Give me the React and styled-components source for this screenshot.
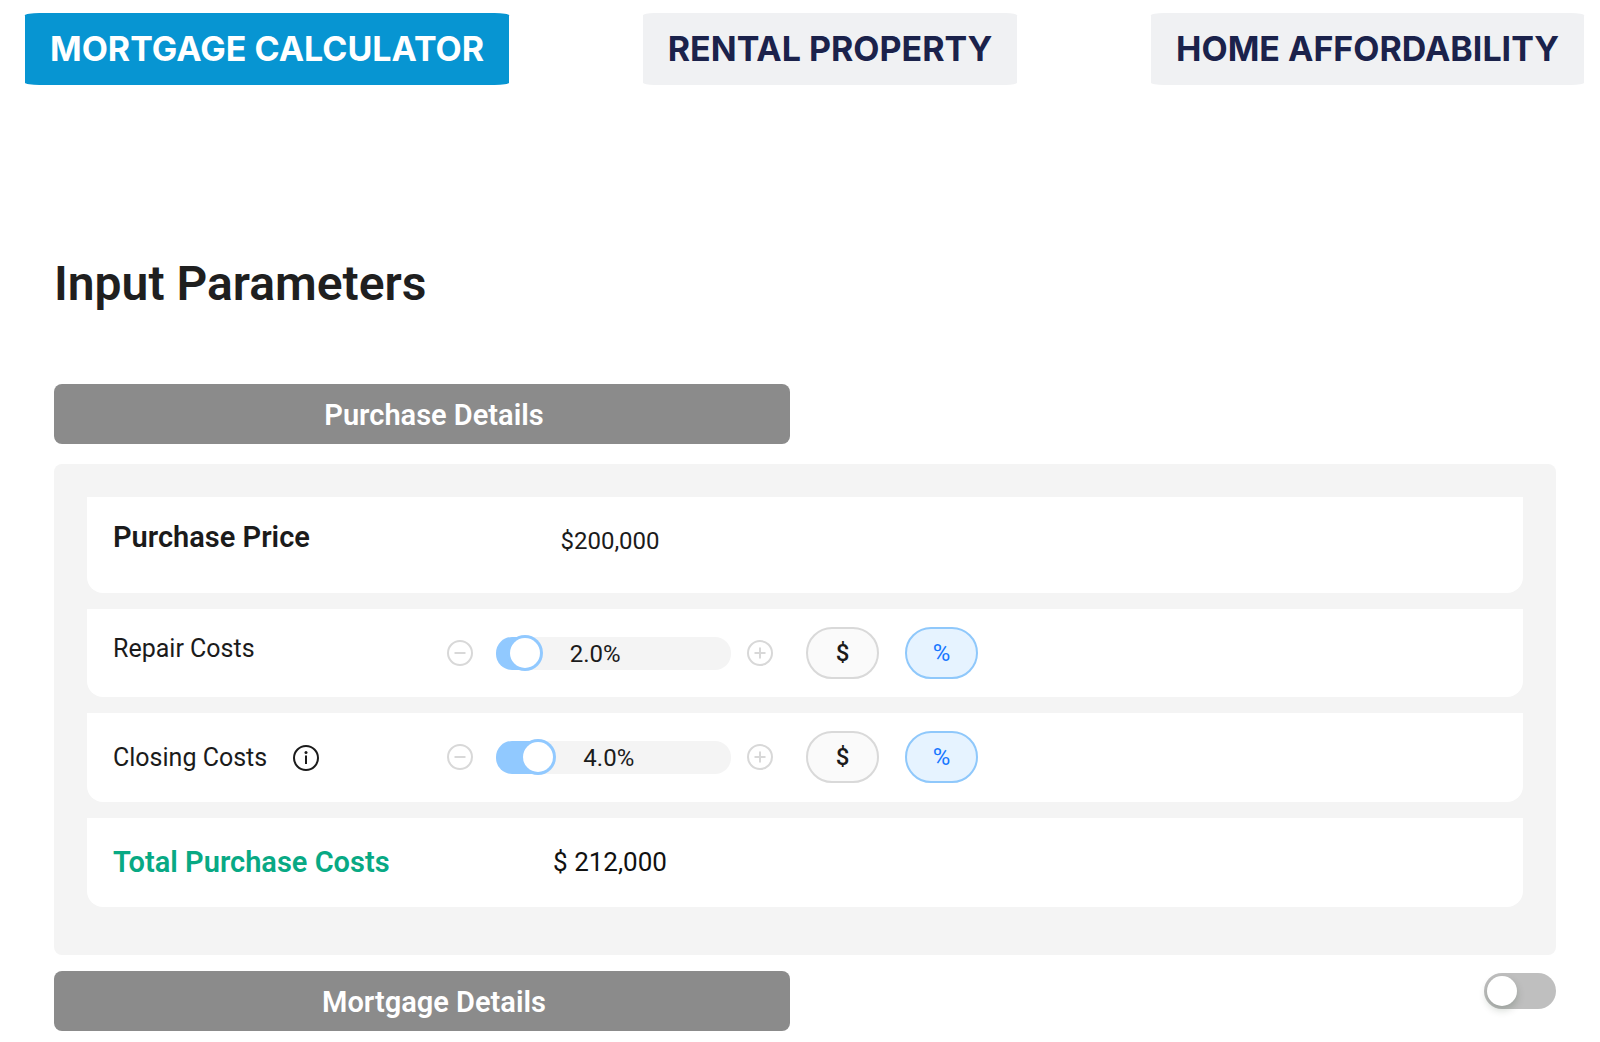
import React, { useId, useState } from "react";
import styled, { createGlobalStyle } from "styled-components";

const GlobalStyle = createGlobalStyle`
  *, *::before, *::after { box-sizing: border-box; }
  body {
    margin: 0;
    background: #ffffff;
    color: #1b1b1b;
    font-family: Roboto, "Liberation Sans", sans-serif;
  }
  button, input { font-family: inherit; }
`;

const Page = styled.div`
  padding-bottom: 11px;
`;

const Tabs = styled.nav`
  display: flex;
  justify-content: space-between;
  padding: 13px 16px 0 25px;
`;

const Tab = styled.button`
  padding: 0 25px;
  border: 0;
  border-radius: 3%;
  background: ${(p) => (p.$active ? "#0795d2" : "#f0f1f3")};
  color: ${(p) => (p.$active ? "#ffffff" : "#1b224b")};
  font: 700 34px/72px Inter, "Liberation Sans", sans-serif;
  text-transform: uppercase;
  white-space: nowrap;
  cursor: pointer;
`;

const Content = styled.main`
  display: flex;
  flex-direction: column;
  padding: 169px 44px 0 54px;
`;

const Title = styled.h1`
  margin: 0 0 70px;
  color: #1f1f1f;
  font-size: 48px;
  font-weight: 600;
  line-height: 60px;
`;

const SectionBar = styled.div`
  display: flex;
  justify-content: space-between;
  align-items: flex-start;
`;

const SectionTitle = styled.h2`
  width: 49%;
  margin: 0;
  padding: 2px 0 0 24px;
  border-radius: 8px;
  background: #8b8b8b;
  color: #ffffff;
  font-size: 29px;
  font-weight: 600;
  line-height: 58px;
  text-align: center;
`;

const Panel = styled.section`
  display: flex;
  flex-direction: column;
  gap: 16px;
  margin: 20px 0 16px;
  padding: 33px 33px 48px;
  border-radius: 8px;
  background: #f4f4f4;
`;

const Row = styled.div`
  display: grid;
  grid-template-columns: 334px 326px auto;
  justify-content: start;
  align-items: start;
  padding: 18px 26px ${(p) => (p.$tall ? "26px" : "18px")};
  border-radius: 0 0 16px 16px;
  background: #ffffff;
`;

const LabelCell = styled.div`
  display: flex;
  align-items: center;
  gap: 26px;
`;

const Label = styled.label`
  color: ${(p) => (p.$accent ? "#08a984" : "#1b1b1b")};
  font-size: ${(p) => (p.$strong ? "29px" : "25px")};
  font-weight: ${(p) => (p.$strong ? 600 : 400)};
  line-height: ${(p) => (p.$raised ? "44px" : "53px")};
  white-space: nowrap;
`;

const InfoButton = styled.button`
  display: flex;
  padding: 0;
  border: 0;
  background: none;
  color: #1b1b1b;
  cursor: pointer;
`;

const PriceInput = styled.input`
  width: 100%;
  height: 52px;
  padding: 0;
  border: 0;
  background: transparent;
  color: #1b1b1b;
  font-size: 24px;
  text-align: center;
`;

const Total = styled.output`
  color: #111111;
  font-size: 26px;
  line-height: 53px;
  text-align: center;
`;

const Stepper = styled.div`
  display: flex;
  align-items: center;
  height: 52px;
`;

const StepButton = styled.button`
  display: flex;
  flex: none;
  padding: 0;
  border: 0;
  background: none;
  color: #d8d8d8;
  cursor: pointer;
`;

const SliderBox = styled.div`
  --thumb-center: calc(15px + var(--ratio) * (100% - 30px));
  position: relative;
  flex: 1;
  height: 33px;
  margin: 0 16px 0 23px;
`;

const Range = styled.input`
  display: block;
  width: 100%;
  height: 33px;
  margin: 0;
  border-radius: 16px;
  background: linear-gradient(
    to right,
    #91c9ff var(--thumb-center),
    #f4f4f4 var(--thumb-center)
  );
  appearance: none;
  cursor: pointer;

  &::-webkit-slider-thumb {
    width: 30px;
    height: 30px;
    border-radius: 50%;
    background: #ffffff;
    box-shadow: 0 0 0 3px #91c9ff;
    appearance: none;
  }
`;

const SliderValue = styled.span`
  position: absolute;
  top: 0;
  left: var(--thumb-center);
  padding-left: 45px;
  font-size: 24px;
  line-height: 34px;
  pointer-events: none;
`;

const Units = styled.div`
  display: flex;
  gap: 26px;
  padding-left: 33px;
`;

const UnitButton = styled.button`
  width: 73px;
  height: 52px;
  padding: 0;
  border: 2px solid ${(p) => (p.$selected ? "#8fc8fb" : "#d9d9d9")};
  border-radius: 26px;
  background: ${(p) => (p.$selected ? "#e6f3ff" : "#fafafa")};
  color: ${(p) => (p.$selected ? "#1677ff" : "#1b1b1b")};
  font-size: 24px;
  font-weight: ${(p) => (p.$selected ? 400 : 500)};
  cursor: pointer;
`;

const SwitchLabel = styled.label`
  display: flex;
  padding-top: 2px;
`;

const Switch = styled.input`
  width: 72px;
  height: 36px;
  margin: 0;
  padding: 3px;
  border-radius: 18px;
  background: ${(p) => (p.checked ? "#1677ff" : "#bfbfbf")};
  appearance: none;
  cursor: pointer;

  &::before {
    content: "";
    display: block;
    width: 30px;
    height: 30px;
    margin-left: ${(p) => (p.checked ? "36px" : "0")};
    border-radius: 50%;
    background: #ffffff;
    box-shadow: 0 4px 8px rgba(0, 35, 11, 0.2);
  }
`;

function CircleIcon({ children }) {
  return (
    <svg width="26" height="26" viewBox="0 0 26 26" fill="none" stroke="currentColor" strokeWidth="2" aria-hidden="true">
      <circle cx="13" cy="13" r="12" />
      {children}
    </svg>
  );
}

const MAX_PERCENT = 30;

function CostRow({ label, value, onChange, raised, info }) {
  const id = useId();
  const [unit, setUnit] = useState("%");
  const step = (delta) => onChange(Math.min(MAX_PERCENT, Math.max(0, value + delta)));
  return (
    <Row>
      <LabelCell>
        <Label htmlFor={id} $raised={raised}>{label}</Label>
        {info && (
          <InfoButton type="button" aria-label={"About " + label}>
            <CircleIcon>
              <path d="M13 10.5v8.5" />
              <circle cx="13" cy="7.5" r="1.5" fill="currentColor" stroke="none" />
            </CircleIcon>
          </InfoButton>
        )}
      </LabelCell>
      <Stepper>
        <StepButton type="button" aria-label={"Decrease " + label} onClick={() => step(-0.5)}>
          <CircleIcon><path d="M7.5 13h11" /></CircleIcon>
        </StepButton>
        <SliderBox style={{ "--ratio": value / MAX_PERCENT }}>
          <Range
            id={id}
            type="range"
            min="0"
            max={MAX_PERCENT}
            step="0.5"
            value={value}
            onChange={(e) => onChange(Number(e.target.value))}
          />
          <SliderValue>{value.toFixed(1)}%</SliderValue>
        </SliderBox>
        <StepButton type="button" aria-label={"Increase " + label} onClick={() => step(0.5)}>
          <CircleIcon><path d="M7.5 13h11M13 7.5v11" /></CircleIcon>
        </StepButton>
      </Stepper>
      <Units>
        {["$", "%"].map((u) => (
          <UnitButton key={u} type="button" $selected={u === unit} aria-pressed={u === unit} onClick={() => setUnit(u)}>
            {u}
          </UnitButton>
        ))}
      </Units>
    </Row>
  );
}

const TABS = ["Mortgage Calculator", "Rental Property", "Home Affordability"];

export default function App() {
  const [tab, setTab] = useState(TABS[0]);
  const [price, setPrice] = useState(200000);
  const [repair, setRepair] = useState(2);
  const [closing, setClosing] = useState(4);
  const [mortgage, setMortgage] = useState(false);
  const total = Math.round(price * (1 + (repair + closing) / 100));

  return (
    <Page>
      <GlobalStyle />
      <Tabs>
        {TABS.map((name) => (
          <Tab key={name} type="button" $active={name === tab} onClick={() => setTab(name)}>
            {name}
          </Tab>
        ))}
      </Tabs>
      <Content>
        <Title>Input Parameters</Title>
        <SectionBar>
          <SectionTitle>Purchase Details</SectionTitle>
        </SectionBar>
        <Panel>
          <Row $tall>
            <Label htmlFor="price" $strong $raised>Purchase Price</Label>
            <PriceInput
              id="price"
              type="text"
              value={"$" + price.toLocaleString("en-US")}
              onChange={(e) => setPrice(Number(e.target.value.replace(/\D/g, "")))}
            />
          </Row>
          <CostRow label="Repair Costs" value={repair} onChange={setRepair} raised />
          <CostRow label="Closing Costs" value={closing} onChange={setClosing} info />
          <Row>
            <Label htmlFor="total" $strong $accent>Total Purchase Costs</Label>
            <Total id="total">$ {total.toLocaleString("en-US")}</Total>
          </Row>
        </Panel>
        <SectionBar>
          <SectionTitle>Mortgage Details</SectionTitle>
          <SwitchLabel>
            <Switch
              type="checkbox"
              role="switch"
              aria-label="Mortgage Details"
              checked={mortgage}
              onChange={(e) => setMortgage(e.target.checked)}
            />
          </SwitchLabel>
        </SectionBar>
      </Content>
    </Page>
  );
}
